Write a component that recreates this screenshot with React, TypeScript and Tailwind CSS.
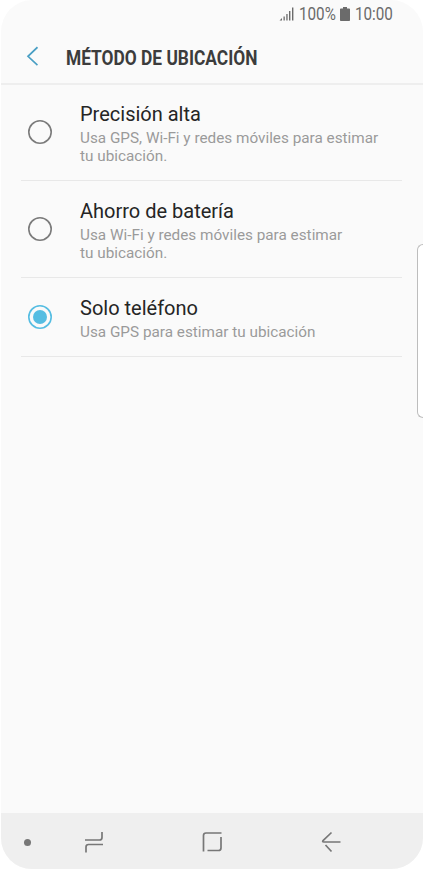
import { useState } from 'react'

interface LocationMethod {
  id: string
  title: string
  lines: string[]
}

const methods: LocationMethod[] = [
  {
    id: 'high',
    title: 'Precisión alta',
    lines: ['Usa GPS, Wi-Fi y redes móviles para estimar', 'tu ubicación.'],
  },
  {
    id: 'battery',
    title: 'Ahorro de batería',
    lines: ['Usa Wi-Fi y redes móviles para estimar', 'tu ubicación.'],
  },
  {
    id: 'device',
    title: 'Solo teléfono',
    lines: ['Usa GPS para estimar tu ubicación'],
  },
]

function StatusBar() {
  return (
    <div className="flex h-7 shrink-0 items-center pl-[278px] pt-px text-[17.5px] leading-none text-[#6b6b6b]">
      <svg className="-mt-px h-[14px] w-[15px] shrink-0" viewBox="0 0 15 14" fill="currentColor">
        <path d="M.5 13.500 3 11v2.500zM4.500 9.500h1.300v4H4.500zM7.300 7h1.300v6.500H7.300zM10 4h1.400v9.500H10zM13 .5h1.400v13H13z" />
      </svg>
      <span className="ml-[5px] w-[37px] whitespace-nowrap">
        <span className="block origin-left scale-x-[0.87]">100%</span>
      </span>
      <svg className="-mt-px ml-1 h-[14px] w-[10px] shrink-0" viewBox="0 0 10 14" fill="currentColor">
        <path d="M3 0h4v1.500h2.200a.8.8 0 0 1 .8.8v10.900a.8.8 0 0 1-.8.8H.8a.8.8 0 0 1-.8-.8V2.300a.8.8 0 0 1 .8-.8H3z" />
      </svg>
      <span className="ml-[5px] w-[39px] whitespace-nowrap">
        <span className="block origin-left scale-x-[0.87]">10:00</span>
      </span>
    </div>
  )
}

function Header() {
  return (
    <header className="flex h-[57px] shrink-0 items-center border-b-2 border-[#eeeeee] pl-[25px]">
      <button aria-label="Atrás" className="mt-px h-5 w-3 text-[#4a9fc4]">
        <svg className="h-5 w-3" viewBox="0 0 12 20" fill="none" stroke="currentColor" strokeWidth="1.700">
          <path d="M11.500 1.200 2 10.300l9.500 8.800" />
        </svg>
      </button>
      <h1 className="ml-7 origin-left scale-x-[0.867] whitespace-nowrap pt-[4px] text-[20px] font-bold leading-6 text-[#3c3c3c]">
        MÉTODO DE UBICACIÓN
      </h1>
    </header>
  )
}

function Radio({ checked }: { checked: boolean }) {
  return (
    <svg
      className={checked ? 'size-6 shrink-0 text-[#55bde2]' : 'size-6 shrink-0 text-[#7b7b7b]'}
      viewBox="0 0 24 24"
      fill="none"
      stroke="currentColor"
      strokeWidth="1.600"
    >
      <circle cx="12" cy="12" r="11.200" />
      {checked && <circle cx="12" cy="12" r="7" fill="currentColor" stroke="none" />}
    </svg>
  )
}

interface MethodRowProps {
  method: LocationMethod
  checked: boolean
  onSelect: () => void
}

function MethodRow({ method, checked, onSelect }: MethodRowProps) {
  return (
    <button
      role="radio"
      aria-checked={checked}
      onClick={onSelect}
      className="mb-px flex w-full items-center border-b border-[#e8e8e8] pb-[15px] pl-[7px] pt-4 text-left"
    >
      <span className="mb-0.5">
        <Radio checked={checked} />
      </span>
      <span className="ml-7 block whitespace-nowrap">
        <span className="mb-0.5 block text-[20px] leading-[26px] text-[#252525]">{method.title}</span>
        {method.lines.map((line) => (
          <span key={line} className="block text-[15.3px] leading-[18px] text-[#9a9a9a]">
            {line}
          </span>
        ))}
      </span>
    </button>
  )
}

function NavigationBar() {
  return (
    <nav className="flex h-[56px] shrink-0 items-center bg-[#efefef] pl-[22.5px] pt-px text-[#777777]">
      <span className="mt-px size-[7px] rounded-full bg-current" />
      <svg className="ml-[53px] h-[22px] w-5" viewBox="0 0 20 22" fill="none" stroke="currentColor" strokeWidth="1.700">
        <path d="M1 9h14.500q2.500 0 2.500-2.500V1M19 13.500H4.500Q2 13.500 2 16v5.500" />
      </svg>
      <svg className="ml-[98px] h-[22px] w-5" viewBox="0 0 20 22" fill="none" stroke="currentColor" strokeWidth="1.700">
        <path d="M19.500 2H4Q1.500 2 1.500 4.500V20.500M5.500 19.500H16.500q2.500 0 2.500-2.500V6" />
      </svg>
      <svg className="ml-[99px] h-[22px] w-5" viewBox="0 0 20 22" fill="none" stroke="currentColor" strokeWidth="1.700">
        <path d="M10.500 1.500 2.300 9.300q-1.500 1.700.5 1.700H19.500M4.500 14l6 6.500" />
      </svg>
    </nav>
  )
}

export default function App() {
  const [selected, setSelected] = useState('device')

  return (
    <div className="h-[870px] w-[423px] bg-white font-['Roboto',sans-serif]">
      <div className="relative flex h-[870px] flex-col overflow-hidden rounded-[32px] border-b border-l border-white bg-[#fafafa]">
        <StatusBar />
        <Header />
        <main role="radiogroup" className="flex-1 pl-5 pr-[21px]">
          {methods.map((method) => (
            <MethodRow
              key={method.id}
              method={method}
              checked={selected === method.id}
              onSelect={() => setSelected(method.id)}
            />
          ))}
        </main>
        <NavigationBar />
        {/* edge panel handle */}
        <div className="absolute right-0 top-[244px] h-[174px] w-[6px] rounded-l-[6px] border border-r-0 border-[#bdbdbd] bg-white" />
      </div>
    </div>
  )
}
